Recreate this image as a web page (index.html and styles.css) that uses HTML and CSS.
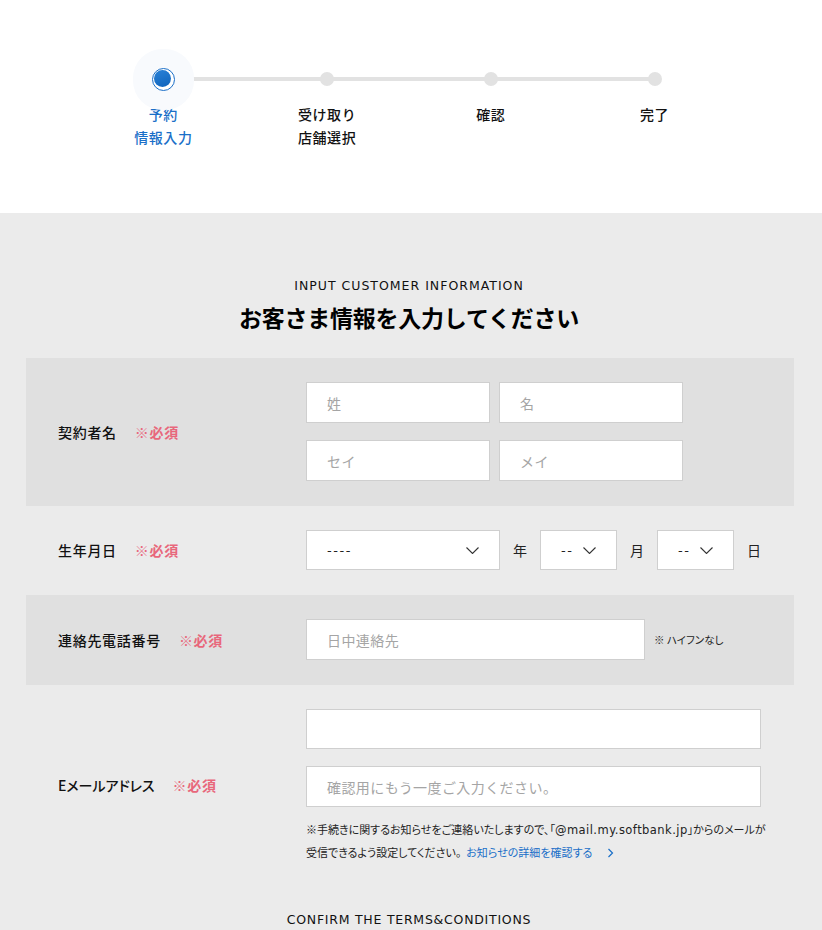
FILE: index.html
```html
<!DOCTYPE html>
<html lang="ja">
<head>
<meta charset="utf-8">
<title>お客さま情報入力</title>
<link rel="stylesheet" href="styles.css">
</head>
<body>
<header class="top">
  <ol class="steps">
    <li class="step is-active">
      <span class="dot-wrap"><span class="dot"></span></span>
      <span class="step-label">予約<br>情報入力</span>
    </li>
    <li class="step">
      <span class="dot-wrap"><span class="dot"></span></span>
      <span class="step-label">受け取り<br>店舗選択</span>
    </li>
    <li class="step">
      <span class="dot-wrap"><span class="dot"></span></span>
      <span class="step-label">確認</span>
    </li>
    <li class="step">
      <span class="dot-wrap"><span class="dot"></span></span>
      <span class="step-label">完了</span>
    </li>
  </ol>
</header>

<main class="main">
  <p class="en-title">INPUT CUSTOMER INFORMATION</p>
  <h1 class="title">お客さま情報を入力してください</h1>

  <div class="form">
    <div class="row row-dark">
      <div class="label">契約者名<span class="req">※必須</span></div>
      <div class="field">
        <div class="pair">
          <div class="input w184"><span class="ph">姓</span></div>
          <div class="input w184"><span class="ph">名</span></div>
        </div>
        <div class="pair">
          <div class="input w184"><span class="ph">セイ</span></div>
          <div class="input w184"><span class="ph">メイ</span></div>
        </div>
      </div>
    </div>

    <div class="row">
      <div class="label">生年月日<span class="req">※必須</span></div>
      <div class="field">
        <div class="date">
          <div class="select w194"><span class="val">----</span>
            <svg class="chev" width="13" height="7" viewBox="0 0 13 7"><polyline points="0.5,0.5 6.5,6.5 12.5,0.5" fill="none" stroke="#333" stroke-width="1.1"/></svg>
          </div>
          <span class="unit">年</span>
          <div class="select w77"><span class="val">--</span>
            <svg class="chev" width="13" height="7" viewBox="0 0 13 7"><polyline points="0.5,0.5 6.5,6.5 12.5,0.5" fill="none" stroke="#333" stroke-width="1.1"/></svg>
          </div>
          <span class="unit">月</span>
          <div class="select w77"><span class="val">--</span>
            <svg class="chev" width="13" height="7" viewBox="0 0 13 7"><polyline points="0.5,0.5 6.5,6.5 12.5,0.5" fill="none" stroke="#333" stroke-width="1.1"/></svg>
          </div>
          <span class="unit">日</span>
        </div>
      </div>
    </div>

    <div class="row row-dark">
      <div class="label">連絡先電話番号<span class="req">※必須</span></div>
      <div class="field">
        <div class="tel">
          <div class="input w339"><span class="ph">日中連絡先</span></div>
          <span class="hint">※ ハイフンなし</span>
        </div>
      </div>
    </div>

    <div class="row">
      <div class="label label-palt">Eメールアドレス<span class="req">※必須</span></div>
      <div class="field">
        <div class="input w455 h40"></div>
        <div class="input w455"><span class="ph">確認用にもう一度ご入力ください。</span></div>
        <p class="note">※手続きに関するお知らせをご連絡いたしますので、「<span class="mail">@mail.my.softbank.jp</span>」からのメールが<br>受信できるよう設定してください。<a class="link" href="#">お知らせの詳細を確認する<svg class="arrow" width="7" height="10" viewBox="0 0 7 10"><polyline points="1.5,1 5.5,5 1.5,9" fill="none" stroke="#1a6fc8" stroke-width="1.2"/></svg></a></p>
      </div>
    </div>
  </div>

  <p class="en-title confirm">CONFIRM THE TERMS&amp;CONDITIONS</p>
</main>
</body>
</html>
```

FILE: styles.css
```css
* { box-sizing: border-box; }
html, body { margin: 0; padding: 0; }
body {
  font-family: "Noto Sans CJK JP", "Noto Sans", sans-serif;
  color: #111;
  background: #ebebeb;
  width: 822px;
  overflow: hidden;
}

/* stepper */
.top {
  background: #fff;
  height: 213px;
  padding-top: 54px;
}
.steps {
  list-style: none;
  margin: 0 auto;
  padding: 0;
  width: 655px;
  display: flex;
  position: relative;
  transform: translateX(-2px);
}
.steps::before {
  content: "";
  position: absolute;
  left: 82px;
  right: 82px;
  top: 23px;
  height: 4px;
  background: #e2e2e2;
}
.step {
  flex: 0 0 163.75px;
  display: flex;
  flex-direction: column;
  align-items: center;
  position: relative;
}
.dot-wrap {
  height: 50px;
  display: flex;
  align-items: center;
  justify-content: center;
}
.dot {
  width: 14px;
  height: 14px;
  border-radius: 50%;
  background: #e2e2e2;
  position: relative;
}
.is-active .dot {
  width: 23px;
  height: 23px;
  background: #fff;
  border: 1.5px solid #1a6fc8;
  box-shadow: 0 0 0 19px #f8fafd;
}
.is-active .dot::after {
  content: "";
  position: absolute;
  left: 1.5px;
  top: 1.5px;
  width: 17px;
  height: 17px;
  border-radius: 50%;
  background: linear-gradient(160deg, #2a82d8, #0f63bb);
}
.step-label {
  font-size: 14px;
  line-height: 23px;
  font-weight: 500;
  text-align: center;
  letter-spacing: 0.04em;
  color: #111;
  margin-top: -1px;
}
.is-active .step-label { color: #1a6fc8; }

/* main */
.main {
  padding-top: 64px;
  padding-bottom: 40px;
}
.en-title {
  margin: 0;
  text-align: center;
  font-family: "DejaVu Sans", sans-serif;
  font-size: 12.5px;
  line-height: 18px;
  letter-spacing: 0.08em;
  color: #111;
  transform: translateX(-2px);
}
.title {
  margin: 5px 0 0;
  text-align: center;
  font-size: 23px;
  line-height: 34px;
  font-weight: 700;
  letter-spacing: -0.01em;
  color: #000;
  transform: translateX(-2px);
}

.form {
  margin: 24px 28px 0 26px;
}
.row {
  display: flex;
  align-items: center;
  padding: 24px 0 25px;
}
.row-dark { background: #e0e0e0; }
.label {
  flex: 0 0 280px;
  padding-left: 32px;
  font-size: 14px;
  font-weight: 500;
  letter-spacing: 0.05em;
  color: #111;
  white-space: nowrap;
}
.label-palt {
  font-feature-settings: "palt";
  letter-spacing: 0;
  margin-top: -3px;
}
.req {
  color: #e8677b;
  font-weight: 700;
  margin-left: 18px;
  font-feature-settings: normal;
  letter-spacing: 0.05em;
}
.field {
  display: flex;
  flex-direction: column;
  gap: 17px;
}
.pair {
  display: flex;
  gap: 9px;
}
.input, .select {
  height: 41px;
  background: #fff;
  border: 1px solid #cfcfcf;
  display: flex;
  align-items: center;
  padding-left: 20px;
  font-size: 14px;
}
.h40 { height: 40px; }
.w184 { width: 184px; }
.w194 { width: 194px; }
.w77 { width: 77px; }
.w339 { width: 339px; }
.w455 { width: 455px; }
.ph { color: #a5a5a5; letter-spacing: 0.03em; }

.date {
  display: flex;
  align-items: center;
}
.select {
  height: 40px;
  justify-content: space-between;
  padding-right: 20px;
}
.select .val {
  font-family: "DejaVu Sans", sans-serif;
  font-size: 13px;
  letter-spacing: 0.12em;
  color: #222;
}
.chev { display: block; }
.unit {
  font-size: 14px;
  margin: 0 13px;
  color: #222;
}

.tel {
  display: flex;
  align-items: center;
}
.hint {
  font-size: 10.5px;
  margin-left: 9px;
  color: #222;
  font-feature-settings: "palt";
}

.note {
  margin: -6px 0 0;
  font-size: 11px;
  line-height: 23px;
  color: #222;
  white-space: nowrap;
  font-feature-settings: "palt";
}
.mail {
  font-family: "DejaVu Sans", sans-serif;
  font-size: 11.5px;
  letter-spacing: 0.04em;
  line-height: 12px;
}
.link {
  color: #1a6fc8;
  text-decoration: none;
  margin-left: 5px;
  line-height: 12px;
}
.arrow {
  margin-left: 15px;
  vertical-align: -1px;
}

.confirm {
  margin-top: 22px;
  letter-spacing: 0.06em;
  transform: translateX(-2px);
}
```
